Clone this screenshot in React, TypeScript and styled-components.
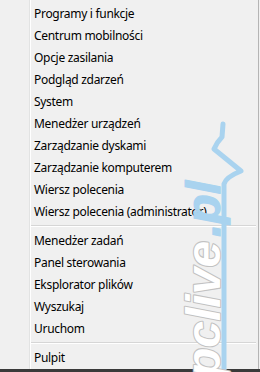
import React from "react";
import styled, { createGlobalStyle } from "styled-components";

const GlobalStyle = createGlobalStyle`
  html, body {
    margin: 0;
    padding: 0;
    background: #f0f0f0;
  }
  body {
    font-family: "Noto Sans", "Open Sans", sans-serif;
  }
`;

const Screen = styled.div`
  width: 260px;
  height: 372px;
  display: flex;
  flex-direction: column;
  overflow: hidden;
  position: relative;
  background: #f0f0f0;
`;

const Menu = styled.div`
  flex: 1;
  display: flex;
  flex-direction: column;
  padding-top: 2px;
  width: 258px;
  border-right: 1px solid #b4b4b4;
  background:
    linear-gradient(to right, transparent 29px, #e2e3e3 29px, #e2e3e3 30px, #ffffff 30px, #ffffff 31px, transparent 31px),
    #f0f0f0;
`;

const Item = styled.div`
  height: 22px;
  display: flex;
  align-items: center;
  padding-left: 34px;
  font-size: 12px;
  color: #000;
  white-space: nowrap;
  letter-spacing: -0.3px;
`;

const Separator = styled.div<{ $top: number }>`
  height: 7px;
  margin-left: 31px;
  margin-right: 2px;
  padding-top: ${(p) => p.$top}px;
  box-sizing: border-box;
  &::after {
    content: "";
    display: block;
    border-top: 1px solid #d6d6d6;
    border-bottom: 1px solid #ffffff;
  }
`;

const BottomBar = styled.div`
  height: 3px;
  background: #3a3a3a;
`;

const Watermark = styled.svg`
  position: absolute;
  left: 0;
  top: 0;
  width: 260px;
  height: 372px;
  pointer-events: none;
`;

const groupA = [
  "Programy i funkcje",
  "Centrum mobilności",
  "Opcje zasilania",
  "Podgląd zdarzeń",
  "System",
  "Menedżer urządzeń",
  "Zarządzanie dyskami",
  "Zarządzanie komputerem",
  "Wiersz polecenia",
  "Wiersz polecenia (administrator)",
];

const groupB = ["Menedżer zadań", "Panel sterowania", "Eksplorator plików", "Wyszukaj", "Uruchom"];

export default function App() {
  return (
    <>
      <GlobalStyle />
      <Screen>
        <Menu>
          {groupA.map((t) => (
            <Item key={t}>{t}</Item>
          ))}
          <Separator $top={3} />
          {groupB.map((t) => (
            <Item key={t}>{t}</Item>
          ))}
          <Separator $top={3} />
          <Item>Pulpit</Item>
        </Menu>
        <BottomBar />
        <Watermark viewBox="0 0 260 372">
          <path
            d="M224,380 L224,184 Q226,177 241,171 L214,149 Q217,142 222,137 L223,124"
            fill="none"
            stroke="#a9d3ef"
            strokeWidth={5}
            strokeLinecap="round"
            strokeLinejoin="round"
          />
          <g
            transform="translate(220,377) rotate(-90)"
            fontFamily="'Liberation Sans', sans-serif"
            fontWeight={700}
            fontStyle="italic"
            fontSize={48}
          >
            <text x={0} y={0} fill="#ffffff" stroke="#c2c2c2" strokeWidth={2.2} paintOrder="stroke" strokeLinejoin="round">
              pclive
            </text>
            <text x={140} y={0} fill="#a9d3ef" stroke="#a9d3ef" strokeWidth={1.2} strokeLinejoin="round">
              .pl
            </text>
          </g>
        </Watermark>
      </Screen>
    </>
  );
}
